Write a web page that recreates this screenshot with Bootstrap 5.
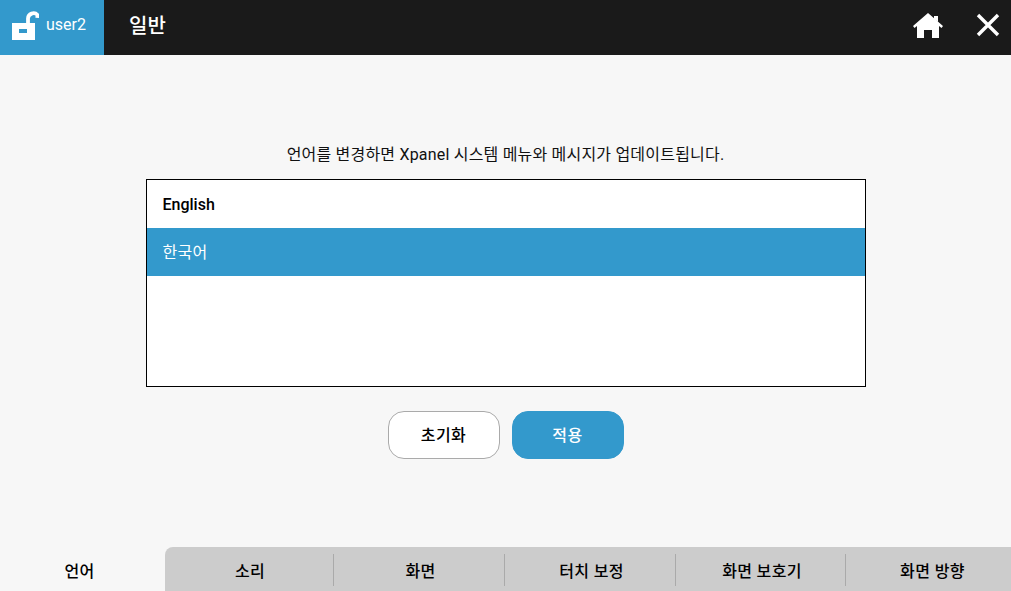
<!DOCTYPE html>
<html lang="ko">
<head>
<meta charset="utf-8">
<title>일반</title>
<link href="https://cdn.jsdelivr.net/npm/bootstrap@5.3.0/dist/css/bootstrap.min.css" rel="stylesheet">
<style>
html,body{height:100%;}
body{width:1011px;height:591px;overflow:hidden;background:#f7f7f7;font-family:Roboto,"Noto Sans CJK KR",sans-serif;color:#000;}
.top-bar{height:55px;background:#1a1a1a;flex:none;}
.user-box{width:104px;background:#3399cc;color:#fff;font-size:16px;font-weight:400;padding-left:12px;padding-bottom:4px;gap:7px;}
.user-box span{margin-bottom:1px;}
.top-title{color:#fff;font-size:20px;font-weight:500;margin-left:25px;padding-bottom:3px;}
.top-actions{gap:33px;padding-right:11px;padding-bottom:5px;}
.main-area{min-height:0;}
.hint-text{font-size:16px;font-weight:400;line-height:20px;margin-top:90px;margin-bottom:14px;color:#111;letter-spacing:.2px;}
.lang-box{width:720px;height:208px;border:1px solid #000;background:#fff;}
.lang-item{height:48px;padding-left:16px;font-size:16px;font-weight:500;padding-top:2px;}
.lang-item.is-on{background:#3399cc;color:#fff;font-weight:400;letter-spacing:.3px;}
.act-row{gap:12px;margin-top:24px;}
.act-btn{width:112px;height:48px;border-radius:16px;font-size:16px;font-weight:500;padding:2px 0 0;letter-spacing:.5px;}
.act-reset{background:#fff;border:1px solid #aaa;color:#000;}
.act-apply{background:#3399cc;border:1px solid #3399cc;color:#fff;}
.tab-row{height:44px;flex:none;}
.tab-first{width:165px;font-size:16px;font-weight:500;padding-top:5px;padding-right:6px;letter-spacing:.3px;}
.tab-rest{background:#cccccc;border-top-left-radius:8px;}
.tab-one{font-size:16px;font-weight:500;padding-top:5px;padding-left:4px;height:100%;position:relative;letter-spacing:.3px;}
.tab-one+.tab-one::before{content:"";position:absolute;left:0;top:7px;height:32px;width:1px;background:#aaa;}
.tab-s1{width:168px;padding-left:2px}.tab-s2{width:171px}.tab-s3{width:171px}.tab-s4{width:170px}.tab-s5{width:166px;padding-left:9px;letter-spacing:.4px;}
</style>
</head>
<body class="d-flex flex-column">
<header class="top-bar d-flex align-items-stretch">
  <div class="user-box d-flex align-items-center">
    <svg width="27" height="29" viewBox="0 0 27 29" fill="#fff" aria-hidden="true"><path d="M0 12h23v17H0z"/><path d="M7 18h8v4H7z" fill="#3399cc"/><path d="M16 13V7.500a5.500 5.500 0 0 1 9.500-3.500l-.2 3" fill="none" stroke="#fff" stroke-width="3.800"/></svg>
    <span>user2</span>
  </div>
  <div class="top-title d-flex align-items-center">일반</div>
  <div class="top-actions d-flex align-items-center ms-auto">
    <svg width="30" height="25" viewBox="0 0 30 25" fill="#fff" aria-hidden="true"><path d="M15 0 30 13 28.500 15 26 13V25H19V17H11V25H4V13L1.500 15 0 13z"/><path d="M21 3h4v6l-4-3z"/></svg>
    <svg width="24" height="24" viewBox="0 0 24 24" aria-hidden="true"><path d="M2 2 22 22M22 2 2 22" stroke="#fff" stroke-width="3.400" fill="none"/></svg>
  </div>
</header>
<main class="main-area flex-grow-1 d-flex flex-column align-items-center">
  <p class="hint-text">언어를 변경하면 Xpanel 시스템 메뉴와 메시지가 업데이트됩니다.</p>
  <div class="lang-box">
    <div class="lang-item d-flex align-items-center">English</div>
    <div class="lang-item is-on d-flex align-items-center">한국어</div>
  </div>
  <div class="act-row d-flex">
    <button type="button" class="btn act-btn act-reset">초기화</button>
    <button type="button" class="btn act-btn act-apply">적용</button>
  </div>
</main>
<nav class="tab-row d-flex">
  <div class="tab-first d-flex align-items-center justify-content-center">언어</div>
  <div class="tab-rest flex-grow-1 d-flex">
    <div class="tab-one tab-s1 d-flex align-items-center justify-content-center">소리</div>
    <div class="tab-one tab-s2 d-flex align-items-center justify-content-center">화면</div>
    <div class="tab-one tab-s3 d-flex align-items-center justify-content-center">터치 보정</div>
    <div class="tab-one tab-s4 d-flex align-items-center justify-content-center">화면 보호기</div>
    <div class="tab-one tab-s5 d-flex align-items-center justify-content-center">화면 방향</div>
  </div>
</nav>
<script src="https://cdn.jsdelivr.net/npm/bootstrap@5.3.0/dist/js/bootstrap.bundle.min.js"></script>
</body>
</html>
